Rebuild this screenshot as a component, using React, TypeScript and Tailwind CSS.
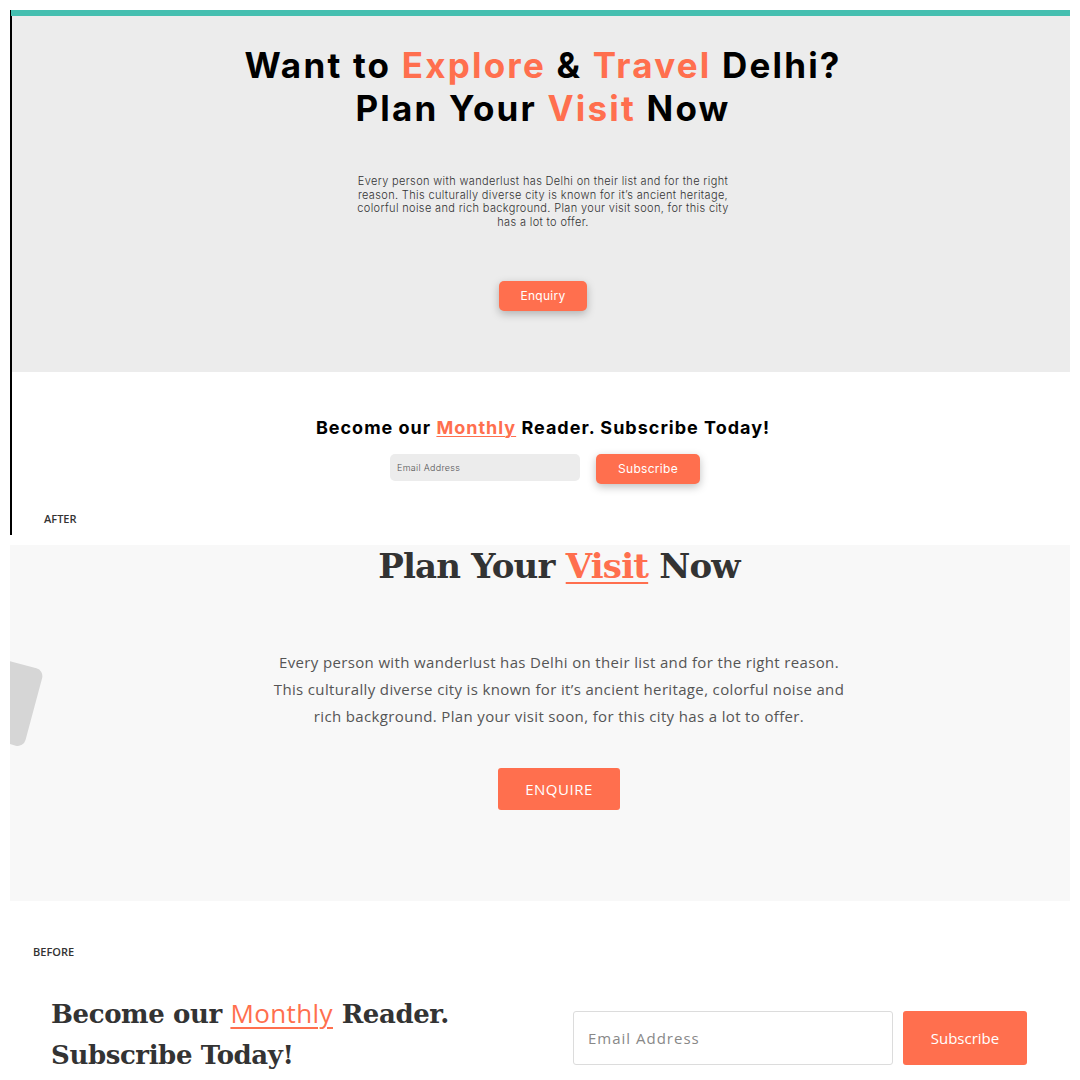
import React from "react";

const ORANGE = "text-[#ff6f4e]";

export default function App() {
  return (
    <div className="w-[1080px] h-[1080px] bg-white overflow-hidden relative">
      {/* AFTER block */}
      <div className="ml-[10px] pt-[10px] w-[1060px]">
        <div className="border-l-2 border-black flex flex-col">
          <div className="h-[6px] bg-[#45bfb0] -ml-[1px]" />
          <div
            className="h-[356px] bg-[#ececec] flex flex-col items-center pt-[28px] pl-[4px]"
            style={{ fontFamily: "Inter, 'Noto Sans', sans-serif" }}
          >
            <h1 className="text-[35px] leading-[43px] font-bold text-black text-center tracking-[2.2px]">
              Want to <span className={ORANGE}>Explore</span> &amp;{" "}
              <span className={ORANGE}>Travel</span> Delhi?
              <br />
              Plan Your <span className={ORANGE}>Visit</span> Now
            </h1>
            <p className="mt-[45px] w-[378px] text-center text-[11px] leading-[13.5px] text-[#333] font-light tracking-[0.35px]">
              Every person with wanderlust has Delhi on their list and for the right
              reason. This culturally diverse city is known for it’s ancient heritage,
              colorful noise and rich background. Plan your visit soon, for this city
              has a lot to offer.
            </p>
            <button className="mt-[52px] w-[88px] h-[30px] rounded-[5px] bg-[#ff6f4e] text-white text-[12px] tracking-[0.3px] shadow-[0_3px_8px_rgba(0,0,0,0.25)]">
              Enquiry
            </button>
          </div>
          <div
            className="h-[163px] bg-white flex flex-col items-center pt-[44px] pl-[4px] relative"
            style={{ fontFamily: "Inter, 'Noto Sans', sans-serif" }}
          >
            <h2 className="text-[18px] leading-[24px] font-bold text-black tracking-[1px]">
              Become our{" "}
              <span className={`${ORANGE} underline decoration-1 underline-offset-2`}>Monthly</span>{" "}
              Reader. Subscribe Today!
            </h2>
            <div className="mt-[14px] flex items-start gap-[16px] ml-[4px]">
              <div className="w-[190px] h-[27px] rounded-[5px] bg-[#ececec] flex items-center pl-[7px] text-[9px] text-[#555] font-light tracking-[0.3px]">
                Email Address
              </div>
              <button className="w-[104px] h-[30px] rounded-[5px] bg-[#ff6f4e] text-white text-[12px] tracking-[0.3px] shadow-[0_3px_8px_rgba(0,0,0,0.25)]">
                Subscribe
              </button>
            </div>
            <div
              className="absolute left-[32px] top-[139px] text-[11px] font-semibold text-[#333]"
              style={{ fontFamily: "'Open Sans', sans-serif" }}
            >
              AFTER
            </div>
          </div>
        </div>
      </div>

      {/* BEFORE block */}
      <div className="ml-[10px] mt-[10px] w-[1060px] h-[356px] bg-[#f8f8f8] relative overflow-hidden flex flex-col items-center pl-[38px]">
        <div className="absolute left-[-45px] top-[115px] w-[70px] h-[80px] rounded-[8px] bg-[#d6d6d6] rotate-[15deg]" />
        <h1
          className="text-[34px] leading-[42px] font-bold text-[#333] text-center tracking-[-0.8px]"
          style={{ fontFamily: "'DejaVu Serif', serif" }}
        >
          Plan Your{" "}
          <span className={`${ORANGE} underline decoration-2 underline-offset-4`}>Visit</span> Now
        </h1>
        <p
          className="mt-[62px] w-[580px] text-center text-[15px] leading-[27px] text-[#555] tracking-[0.35px]"
          style={{ fontFamily: "'Open Sans', sans-serif" }}
        >
          Every person with wanderlust has Delhi on their list and for the right reason.
          <br />
          This culturally diverse city is known for it’s ancient heritage, colorful noise and
          <br />
          rich background. Plan your visit soon, for this city has a lot to offer.
        </p>
        <button
          className="mt-[38px] w-[122px] h-[42px] rounded-[3px] bg-[#ff6f4e] text-white text-[15px] tracking-[0.5px]"
          style={{ fontFamily: "'Open Sans', sans-serif" }}
        >
          ENQUIRE
        </button>
      </div>

      <div className="h-[179px] relative">
        <div
          className="absolute left-[33px] top-[43px] text-[11px] font-semibold text-[#333]"
          style={{ fontFamily: "'Open Sans', sans-serif" }}
        >
          BEFORE
        </div>
        <div className="absolute left-[51px] top-[92px] flex w-[976px] justify-between items-start">
          <h2
            className="text-[26px] leading-[41px] font-bold text-[#333] tracking-[-0.4px]"
            style={{ fontFamily: "'DejaVu Serif', serif" }}
          >
            Become our{" "}
            <span
              className={`${ORANGE} font-normal underline decoration-2 underline-offset-4 tracking-[0.4px]`}
              style={{ fontFamily: "'Open Sans', sans-serif" }}
            >
              Monthly
            </span>{" "}
            Reader.
            <br />
            Subscribe Today!
          </h2>
          <div className="flex gap-[10px] mt-[18px]" style={{ fontFamily: "'Open Sans', sans-serif" }}>
            <div className="w-[320px] h-[54px] rounded-[3px] border border-[#dcdcdc] bg-white flex items-center pl-[14px] text-[15px] text-[#888] tracking-[1px]">
              Email Address
            </div>
            <button className="w-[124px] h-[54px] rounded-[3px] bg-[#ff6f4e] text-white text-[15px]">
              Subscribe
            </button>
          </div>
        </div>
      </div>
    </div>
  );
}
